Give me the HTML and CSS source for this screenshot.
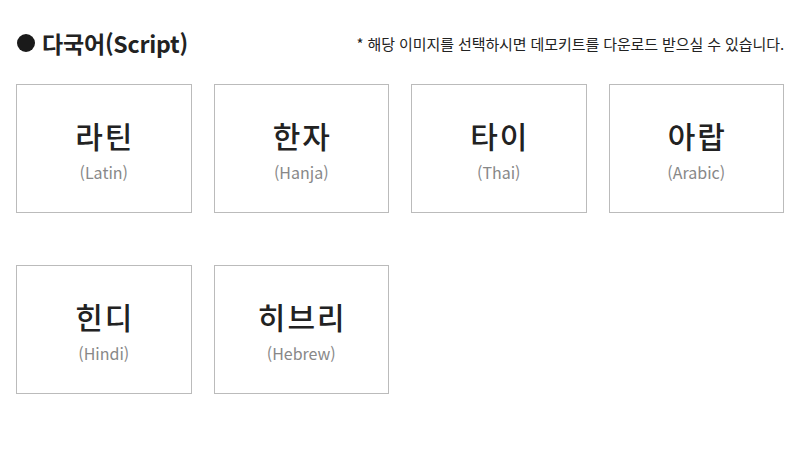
FILE: index.html
```html
<!DOCTYPE html>
<html lang="ko">
<head>
  <meta charset="UTF-8" />
  <title>다국어(Script)</title>
  <link rel="stylesheet" href="styles.css">
</head>
<body>
  <div class="wrap">
    <div class="top">
      <h2 class="tit"><span class="dot"></span>다국어(Script)</h2>
      <p class="note">* 해당 이미지를 선택하시면 데모키트를 다운로드 받으실 수 있습니다.</p>
    </div>
    <ul class="list">
      <li><a href="#"><strong>라틴</strong><span>(Latin)</span></a></li>
      <li><a href="#"><strong>한자</strong><span>(Hanja)</span></a></li>
      <li><a href="#"><strong>타이</strong><span>(Thai)</span></a></li>
      <li><a href="#"><strong>아랍</strong><span>(Arabic)</span></a></li>
      <li><a href="#"><strong>힌디</strong><span>(Hindi)</span></a></li>
      <li><a href="#"><strong>히브리</strong><span>(Hebrew)</span></a></li>
    </ul>
  </div>
</body>
</html>
```
FILE: styles.css
```css
body {
  margin: 0;
  font-family: "Noto Sans CJK KR", "Noto Sans", sans-serif;
  color: #222;
  background: #fff;
}
.wrap {
  padding: 28px 16px 0;
}
.top {
  display: flex;
  justify-content: space-between;
  align-items: center;
  height: 30px;
}
.tit {
  margin: 0;
  font-size: 23px;
  font-weight: 700;
  letter-spacing: -0.2px;
  display: flex;
  align-items: center;
}
.dot {
  width: 18px;
  height: 18px;
  border-radius: 50%;
  background: #1a1a1a;
  margin: 0 7px 0 1px;
}
.note {
  margin: 0;
  font-size: 15px;
  letter-spacing: -0.1px;
}
.list {
  list-style: none;
  margin: 26px 0 0;
  padding: 0;
  display: grid;
  grid-template-columns: repeat(4, 1fr);
  column-gap: 22px;
  row-gap: 52px;
}
.list a {
  display: flex;
  flex-direction: column;
  align-items: center;
  justify-content: center;
  height: 127px;
  border: 1px solid #bbb;
  text-decoration: none;
  color: #222;
}
.list strong {
  font-size: 30px;
  font-weight: 500;
  letter-spacing: 2px;
  margin-right: -2px;
  line-height: 40px;
}
.list span {
  margin-top: 6px;
  font-size: 16px;
  color: #888;
  line-height: 22px;
}
```
